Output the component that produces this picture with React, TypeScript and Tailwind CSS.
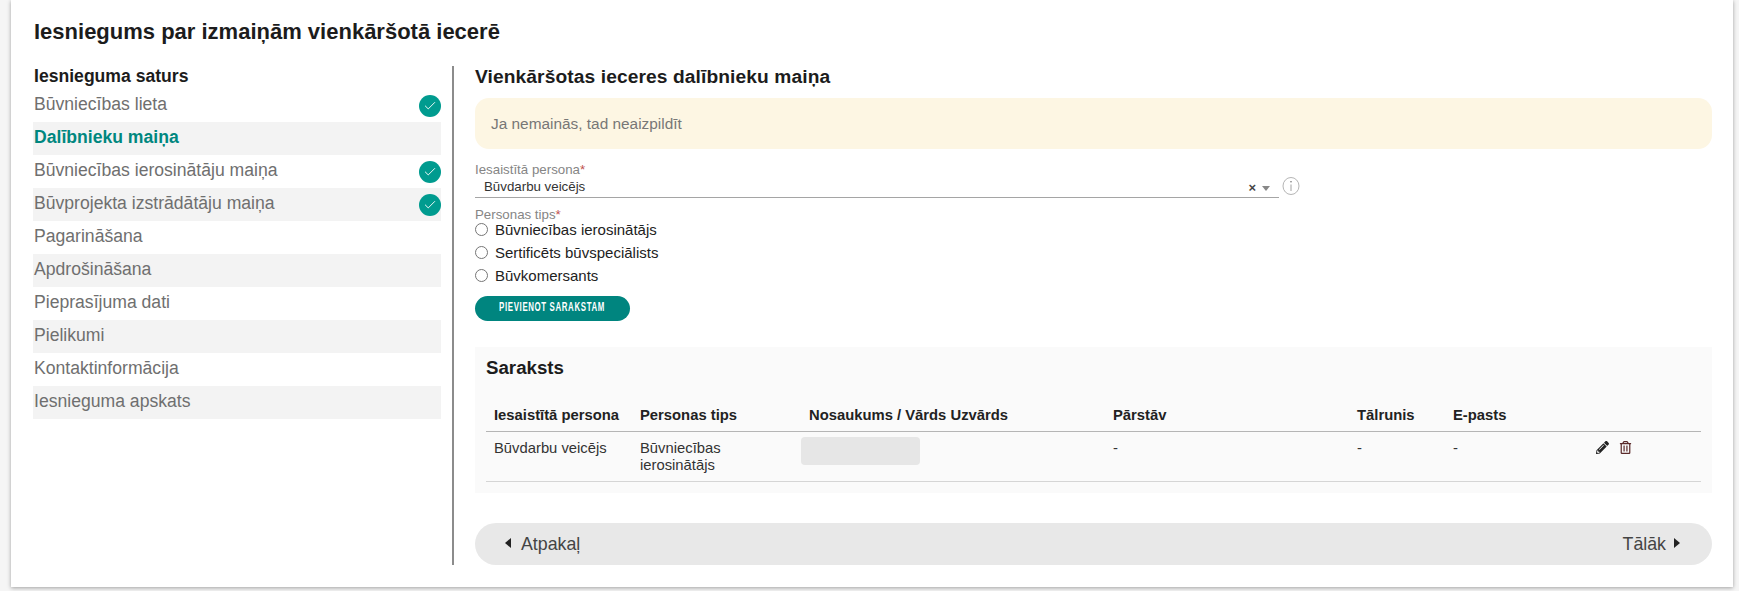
import { Check } from "lucide-react";
import { FaPencilAlt, FaRegTrashAlt } from "react-icons/fa";

type NavItem = {
  label: string;
  done?: boolean;
  active?: boolean;
};

const NAV_ITEMS: NavItem[] = [
  { label: "Būvniecības lieta", done: true },
  { label: "Dalībnieku maiņa", active: true },
  { label: "Būvniecības ierosinātāju maiņa", done: true },
  { label: "Būvprojekta izstrādātāju maiņa", done: true },
  { label: "Pagarināšana" },
  { label: "Apdrošināšana" },
  { label: "Pieprasījuma dati" },
  { label: "Pielikumi" },
  { label: "Kontaktinformācija" },
  { label: "Iesnieguma apskats" },
];

const PERSON_TYPES = [
  "Būvniecības ierosinātājs",
  "Sertificēts būvspeciālists",
  "Būvkomersants",
];

function SideNav() {
  return (
    <aside className="w-[408px] shrink-0">
      <h2 className="h-[23px] pl-px text-[17.6px] leading-[21px] font-bold text-[#1c1c1c]">
        Iesnieguma saturs
      </h2>
      <ul>
        {NAV_ITEMS.map((item, index) => (
          <li
            key={item.label}
            className={`flex h-[33px] items-center justify-between pl-px text-[17.6px] ${
              index % 2 === 1 ? "bg-[#f3f3f3]" : ""
            } ${item.active ? "font-bold text-[#00877f]" : "text-[#6f6f6f]"}`}
          >
            <span className="-mt-[3px]">{item.label}</span>
            {item.done ? (
              <span className="flex h-[22px] w-[22px] items-center justify-center rounded-full bg-[#009b8f]">
                <Check size={14} strokeWidth={1.6} className="text-white" />
              </span>
            ) : null}
          </li>
        ))}
      </ul>
    </aside>
  );
}

function Label({ text, height }: { text: string; height: string }) {
  return (
    <div className={`${height} text-[13.3px] leading-[15px] text-[#858585]`}>
      {text}
      <span className="text-[#c0504d]">*</span>
    </div>
  );
}

function PersonSelect() {
  return (
    <div className="flex items-start">
      <div className="w-[804px]">
        <Label text="Iesaistītā persona" height="h-[15px]" />
        <div className="flex h-[21px] items-center justify-between border-b border-[#a5a5a5] pr-[9px] pl-[9px] text-[13.3px] text-[#333]">
          <span>Būvdarbu veicējs</span>
          <span className="flex items-center gap-[6px]">
            <span className="text-[13px] leading-none font-bold text-[#444]">×</span>
            <span className="mt-[3px] h-0 w-0 border-x-[4px] border-t-[5px] border-x-transparent border-t-[#888]" />
          </span>
        </div>
      </div>
      <svg width="18" height="20" viewBox="0 0 18 20" className="mt-[14px] ml-[3px]" fill="none">
        <ellipse cx="9" cy="10" rx="8" ry="8.5" stroke="#b5b5b5" />
        <path d="M9 8.5V15" stroke="#8a8a8a" strokeWidth="0.8" />
        <circle cx="9" cy="5.8" r="0.7" fill="#555" />
      </svg>
    </div>
  );
}

function PersonTypeRadios() {
  return (
    <div className="mt-[9px]">
      <Label text="Personas tips" height="h-[12px]" />
      {PERSON_TYPES.map((type) => (
        <div key={type} className="flex h-[23px] items-center text-[15px] text-[#222]">
          <span className="-mt-[3px] h-[13px] w-[13px] rounded-full border border-[#767676] bg-white" />
          <span className="ml-[7px]">{type}</span>
        </div>
      ))}
    </div>
  );
}

function ListTable() {
  return (
    <section className="mt-[26px] h-[146px] bg-[#fafafa] px-[11px]">
      <h3 className="pt-[11px] text-[18.7px] leading-[20px] font-bold text-[#1c1c1c]">Saraksts</h3>
      <table className="mt-[21px] w-full table-fixed border-collapse text-[14.8px] text-[#333]">
        <colgroup>
          <col className="w-[146px]" />
          <col className="w-[169px]" />
          <col className="w-[304px]" />
          <col className="w-[244px]" />
          <col className="w-[96px]" />
          <col className="w-[143px]" />
          <col />
        </colgroup>
        <thead>
          <tr className="h-[32px] border-b border-[#b5b5b5] text-left text-[#222]">
            <th className="pl-2 font-bold">Iesaistītā persona</th>
            <th className="pl-2 font-bold">Personas tips</th>
            <th className="pl-2 font-bold">Nosaukums / Vārds Uzvārds</th>
            <th className="pl-2 font-bold">Pārstāv</th>
            <th className="pl-2 font-bold">Tālrunis</th>
            <th className="pl-2 font-bold">E-pasts</th>
            <th />
          </tr>
        </thead>
        <tbody>
          <tr className="h-[50px] border-b border-[#d5d5d5] align-top leading-[17px]">
            <td className="pt-[8px] pl-2">Būvdarbu veicējs</td>
            <td className="pt-[8px] pl-2">
              Būvniecības
              <br />
              ierosinātājs
            </td>
            <td className="pt-[5px]">
              <div className="h-[28px] w-[119px] rounded-[4px] bg-[#e6e6e6]" />
            </td>
            <td className="pt-[8px] pl-2">-</td>
            <td className="pt-[8px] pl-2">-</td>
            <td className="pt-[8px] pl-2">-</td>
            <td className="pt-[9px] pl-2">
              <span className="flex items-center gap-[10px]">
                <FaPencilAlt size={13} className="text-[#222]" />
                <FaRegTrashAlt size={13} className="text-[#5a2a2a]" />
              </span>
            </td>
          </tr>
        </tbody>
      </table>
    </section>
  );
}

function PagerBar() {
  return (
    <div className="mt-[30px] flex h-[42px] items-center justify-between rounded-[21px] bg-[#e8e8e8] pr-[32px] pl-[30px] text-[17.8px] text-[#444]">
      <span className="flex items-center gap-[10px]">
        <span className="-mt-[3px] h-0 w-0 border-y-[5px] border-r-[6px] border-y-transparent border-r-[#222]" />
        Atpakaļ
      </span>
      <span className="flex items-center gap-[8px]">
        Tālāk
        <span className="-mt-[3px] h-0 w-0 border-y-[5px] border-l-[6px] border-y-transparent border-l-[#222]" />
      </span>
    </div>
  );
}

export default function App() {
  return (
    <div className="h-[591px] bg-[#f5f5f5] pr-[6px] pl-[11px] font-['Liberation_Sans',Arial,sans-serif]">
      <main className="h-[587px] bg-white pt-[19px] pr-[21px] pl-[22px] shadow-[0_1px_4px_rgba(0,0,0,0.35)]">
        <h1 className="h-[26px] pl-px text-[22px] leading-[26px] font-bold text-[#1c1c1c]">
          Iesniegums par izmaiņām vienkāršotā iecerē
        </h1>
        <div className="mt-[21px] flex h-[499px]">
          <SideNav />
          <div className="ml-[11px] w-[2px] shrink-0 bg-[#8c8c8c]" />
          <div className="ml-[21px] min-w-0 flex-1">
            <h2 className="h-[22px] text-[19.2px] leading-[22px] font-bold tracking-[0.1px] text-[#1c1c1c]">
              Vienkāršotas ieceres dalībnieku maiņa
            </h2>
            <div className="mt-[10px] flex h-[51px] items-center rounded-[14px] bg-[#fdf6e3] pl-[16px] text-[15.4px] text-[#777]">
              Ja nemainās, tad neaizpildīt
            </div>
            <div className="mt-[13px]">
              <PersonSelect />
              <PersonTypeRadios />
            </div>
            <button
              type="button"
              className="mt-[8px] flex h-[25px] w-[155px] items-center justify-center rounded-full bg-[#00857f] pb-[2px] text-[12.5px] font-bold tracking-[1px] whitespace-nowrap text-white"
            >
              <span className="inline-block scale-x-[0.63]">PIEVIENOT SARAKSTAM</span>
            </button>
            <ListTable />
            <PagerBar />
          </div>
        </div>
      </main>
    </div>
  );
}
